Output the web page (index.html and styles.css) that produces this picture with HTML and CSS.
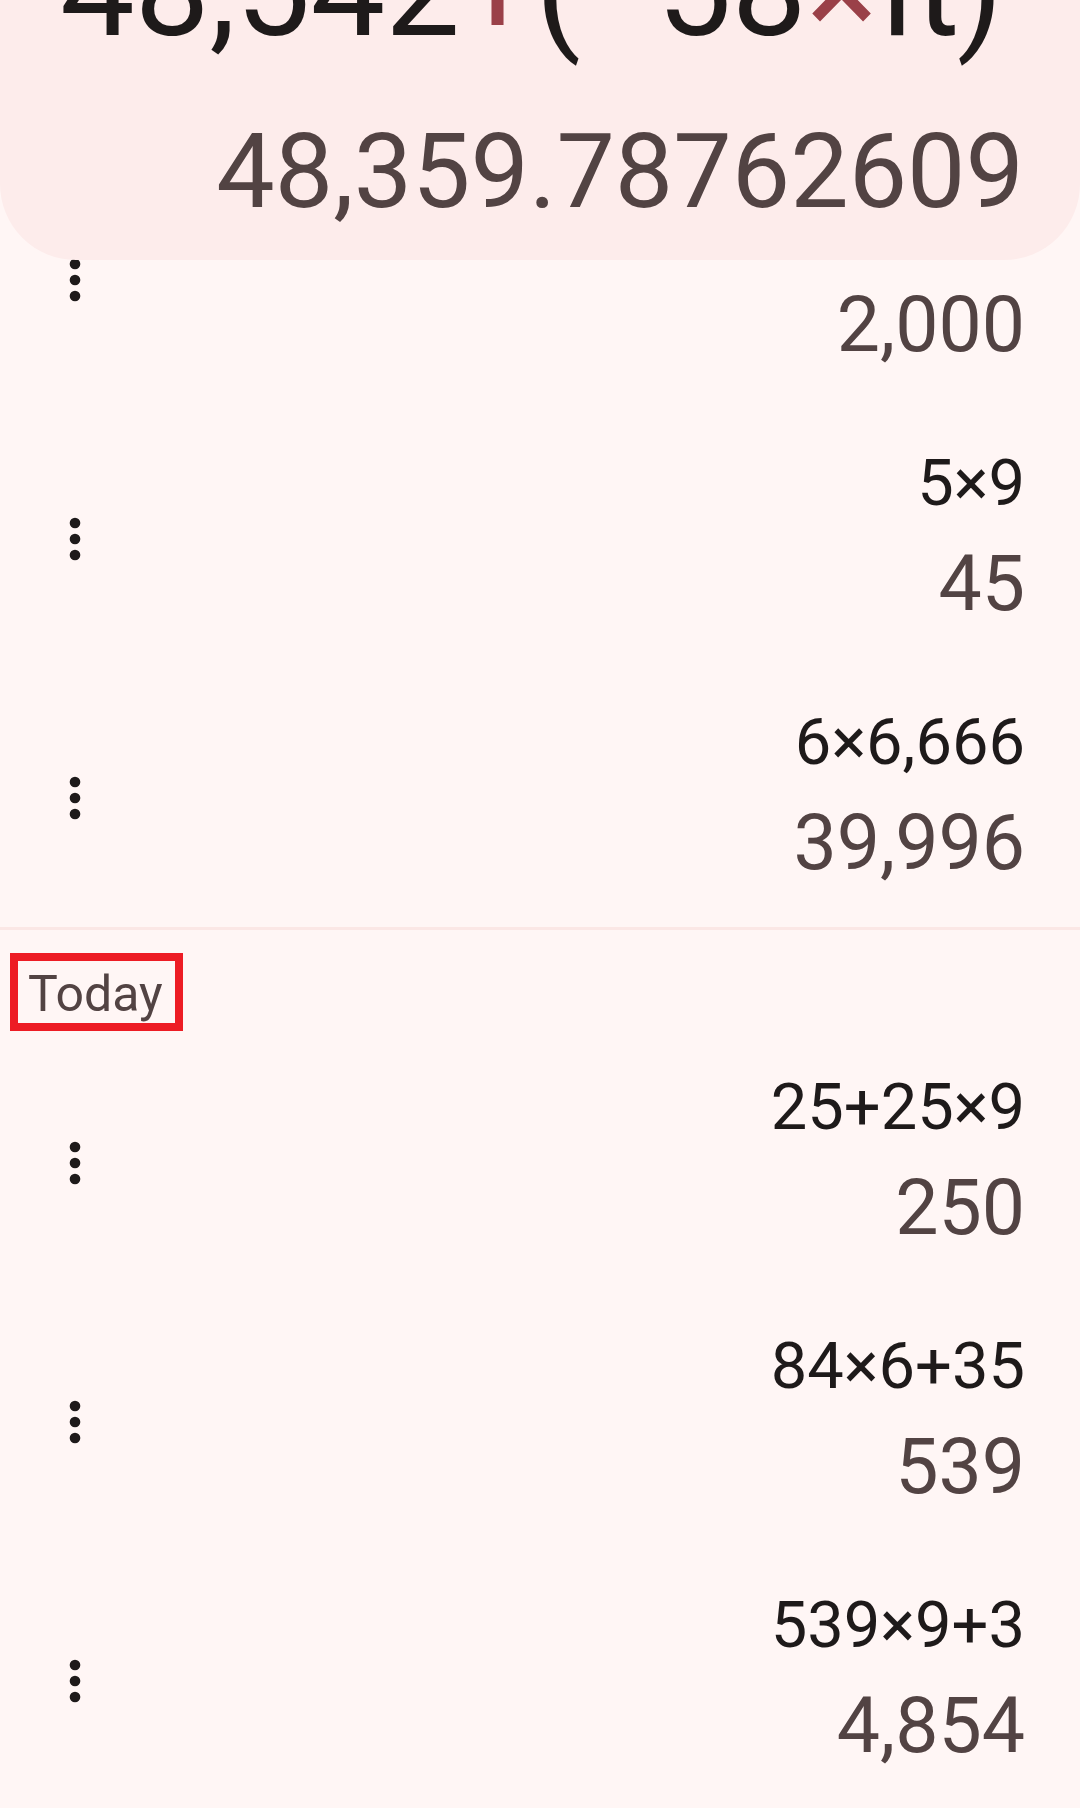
FILE: index.html
```html
<!DOCTYPE html>
<html lang="en">
<head>
<meta charset="utf-8">
<title>Calculator history</title>
<link rel="stylesheet" href="styles.css">
</head>
<body>
<header class="display">
  <div class="display-expr">48,542<span class="op">+</span>(<span class="op">−</span>58<span class="op">×</span>π)</div>
  <div class="display-result">48,359.78762609</div>
</header>

<main class="history">
  <section class="group">
    <div class="row">
      <svg class="more" viewBox="0 0 24 24"><circle cx="12" cy="6" r="2"/><circle cx="12" cy="12" r="2"/><circle cx="12" cy="18" r="2"/></svg>
      <div class="calc"><div class="expr">1,000×2</div><div class="res">2,000</div></div>
    </div>
    <div class="row">
      <svg class="more" viewBox="0 0 24 24"><circle cx="12" cy="6" r="2"/><circle cx="12" cy="12" r="2"/><circle cx="12" cy="18" r="2"/></svg>
      <div class="calc"><div class="expr">5×9</div><div class="res">45</div></div>
    </div>
    <div class="row">
      <svg class="more" viewBox="0 0 24 24"><circle cx="12" cy="6" r="2"/><circle cx="12" cy="12" r="2"/><circle cx="12" cy="18" r="2"/></svg>
      <div class="calc"><div class="expr">6×6,666</div><div class="res">39,996</div></div>
    </div>
  </section>

  <div class="divider"></div>

  <section class="group">
    <div class="label-wrap"><span class="section-label">Today</span></div>
    <div class="row">
      <svg class="more" viewBox="0 0 24 24"><circle cx="12" cy="6" r="2"/><circle cx="12" cy="12" r="2"/><circle cx="12" cy="18" r="2"/></svg>
      <div class="calc"><div class="expr">25+25×9</div><div class="res">250</div></div>
    </div>
    <div class="row">
      <svg class="more" viewBox="0 0 24 24"><circle cx="12" cy="6" r="2"/><circle cx="12" cy="12" r="2"/><circle cx="12" cy="18" r="2"/></svg>
      <div class="calc"><div class="expr">84×6+35</div><div class="res">539</div></div>
    </div>
    <div class="row">
      <svg class="more" viewBox="0 0 24 24"><circle cx="12" cy="6" r="2"/><circle cx="12" cy="12" r="2"/><circle cx="12" cy="18" r="2"/></svg>
      <div class="calc"><div class="expr">539×9+3</div><div class="res">4,854</div></div>
    </div>
  </section>
</main>
</body>
</html>
```
FILE: styles.css
```css
html, body {
  margin: 0;
  padding: 0;
  overflow: hidden;
}

body {
  background: #fff6f5;
  font-family: Roboto, "Noto Sans", "Liberation Sans", sans-serif;
  color: #1e1a1a;
}

.display {
  position: relative;
  z-index: 1;
  display: flex;
  flex-direction: column;
  background: #fdeceb;
  border-radius: 0 0 76px 76px;
  padding: 0 56px 36px 60px;
}

.display-expr {
  margin-top: -77px;
  font-size: 133px;
  line-height: 133px;
  white-space: nowrap;
  color: #1e1a1a;
}

.op {
  color: #9a4048;
}

.display-result {
  margin-top: 64px;
  font-size: 104px;
  line-height: 104px;
  text-align: right;
  color: #524343;
  white-space: nowrap;
}

.history {
  margin-top: -110px;
}

.row {
  display: flex;
  align-items: center;
  padding: 28.5px 55px 28.5px 43px;
}

.more {
  width: 64px;
  height: 64px;
  fill: #1e1a1a;
  flex: none;
}

.calc {
  flex: 1;
  text-align: right;
  white-space: nowrap;
}

.expr {
  font-size: 65px;
  line-height: 90px;
  color: #1e1a1a;
}

.res {
  font-size: 77px;
  line-height: 112px;
  color: #524343;
}

.divider {
  height: 3px;
  background: #fbe7e5;
}

.label-wrap {
  padding: 23px 0 2px 10px;
}

.section-label {
  display: inline-block;
  border: 8px solid #ed1c24;
  padding: 4px 12px 0 10px;
  font-size: 50px;
  line-height: 58px;
  color: #524343;
}
```
